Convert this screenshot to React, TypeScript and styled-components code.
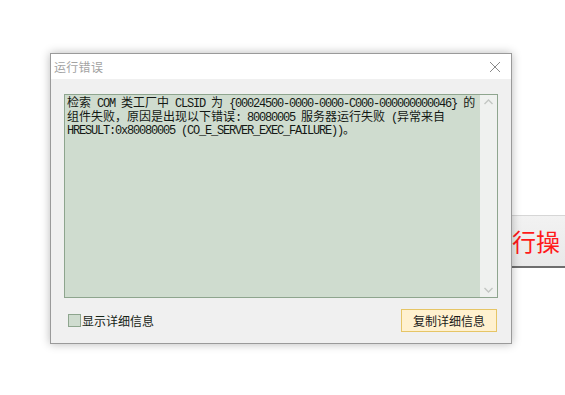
import React from "react";
import styled, { createGlobalStyle } from "styled-components";

const GlobalStyle = createGlobalStyle`
  html, body {
    margin: 0;
    padding: 0;
    background: #ffffff;
  }
  body {
    font-family: "Noto Sans CJK SC", "Liberation Sans", sans-serif;
  }
`;

export const Desktop = styled.div`
  position: relative;
  width: 565px;
  height: 395px;
  overflow: hidden;
  background: #ffffff;
`;

/* button of the window underneath, mostly hidden by the dialog */
export const BackButton = styled.div`
  position: absolute;
  left: 440px;
  top: 215px;
  width: 200px;
  height: 53px;
  box-sizing: border-box;
  border-top: 1px solid #d6d6d6;
  border-bottom: 2px solid #6e6e6e;
  background: linear-gradient(#f2f2f2, #e9e9e9);
  display: flex;
  align-items: center;
  padding-left: 72px;
  font-size: 24px;
  line-height: 1;
  color: #ff1a1a;
  white-space: nowrap;
`;

export const Dialog = styled.div`
  position: absolute;
  left: 50px;
  top: 53px;
  width: 462px;
  height: 291px;
  box-sizing: border-box;
  border: 1px solid #9a9a9a;
  background: #f0f0f0;
  box-shadow: 0 0 9px rgba(0, 0, 0, 0.28);
  display: flex;
  flex-direction: column;
`;

export const TitleBar = styled.div`
  height: 25px;
  background: #ffffff;
  display: flex;
  align-items: center;
  justify-content: space-between;
  padding: 0 10px 0 3px;
  flex-shrink: 0;
`;

export const Title = styled.span`
  font-size: 12px;
  color: #a3a3a3;
  letter-spacing: 0.3px;
`;

export const CloseIcon = styled.svg`
  width: 12px;
  height: 12px;
  display: block;
`;

export const Body = styled.div`
  flex: 1;
  display: flex;
  flex-direction: column;
  padding: 15px 13px 0 13px;
`;

export const TextBox = styled.div`
  height: 204px;
  box-sizing: border-box;
  border: 1px solid #8ea58e;
  background: #cfdccf;
  display: flex;
`;

export const Message = styled.div`
  flex: 1;
  padding: 0 2px;
  font-size: 12px;
  line-height: 13.5px;
  color: #141814;
  font-family: "Noto Sans CJK SC", sans-serif;
`;

export const Line = styled.div`
  white-space: pre;
  height: 13.5px;
`;

export const Ascii = styled.span`
  font-family: "Liberation Mono", monospace;
  font-size: 12px;
  letter-spacing: -1.2px;
`;

export const ScrollBar = styled.div`
  width: 17px;
  background: #eff1ef;
  display: flex;
  flex-direction: column;
  justify-content: space-between;
  align-items: center;
  padding: 4px 0;
`;

export const Arrow = styled.svg`
  width: 9px;
  height: 6px;
  display: block;
`;

export const Footer = styled.div`
  display: flex;
  align-items: center;
  justify-content: space-between;
  padding: 11px 1px 0 4px;
`;

export const CheckLabel = styled.label`
  display: flex;
  align-items: center;
  font-size: 12px;
  color: #162416;
  gap: 1px;
`;

export const CheckBox = styled.span`
  width: 13px;
  height: 13px;
  box-sizing: border-box;
  border: 1px solid #8ea58e;
  background: #cfdccf;
  display: inline-block;
`;

export const CopyButton = styled.button`
  width: 96px;
  height: 23px;
  box-sizing: border-box;
  border: 1px solid #e6c566;
  background: #fff1cf;
  font-family: "Noto Sans CJK SC", sans-serif;
  font-size: 12px;
  color: #1a1a1a;
  padding: 0;
  display: flex;
  align-items: center;
  justify-content: center;
`;

const lines = [
  "检索 COM 类工厂中 CLSID 为 {00024500-0000-0000-C000-000000000046} 的",
  "组件失败，原因是出现以下错误: 80080005 服务器运行失败 (异常来自",
  "HRESULT:0x80080005 (CO_E_SERVER_EXEC_FAILURE))。",
];

// ascii runs are set in a narrow mono face, the rest in CJK at full size
const renderLine = (text: string) =>
  text.split(/([\x20-\x7e]+)/).map((part, i) =>
    /^[\x20-\x7e]+$/.test(part) ? <Ascii key={i}>{part}</Ascii> : <span key={i}>{part}</span>
  );

const App: React.FC = () => {
  return (
    <>
      <GlobalStyle />
      <Desktop>
        <BackButton>行操</BackButton>
        <Dialog>
          <TitleBar>
            <Title>运行错误</Title>
            <CloseIcon viewBox="0 0 12 12">
              <path d="M1 1 L11 11 M11 1 L1 11" stroke="#8a8a8a" strokeWidth="1" fill="none" />
            </CloseIcon>
          </TitleBar>
          <Body>
            <TextBox>
              <Message>
                {lines.map((l, i) => (
                  <Line key={i}>{renderLine(l)}</Line>
                ))}
              </Message>
              <ScrollBar>
                <Arrow viewBox="0 0 9 6">
                  <path d="M0.5 5 L4.5 1 L8.5 5" stroke="#c3c6c3" strokeWidth="1.4" fill="none" />
                </Arrow>
                <Arrow viewBox="0 0 9 6">
                  <path d="M0.5 1 L4.5 5 L8.5 1" stroke="#c3c6c3" strokeWidth="1.4" fill="none" />
                </Arrow>
              </ScrollBar>
            </TextBox>
            <Footer>
              <CheckLabel>
                <CheckBox />
                显示详细信息
              </CheckLabel>
              <CopyButton>复制详细信息</CopyButton>
            </Footer>
          </Body>
        </Dialog>
      </Desktop>
    </>
  );
};

export default App;
